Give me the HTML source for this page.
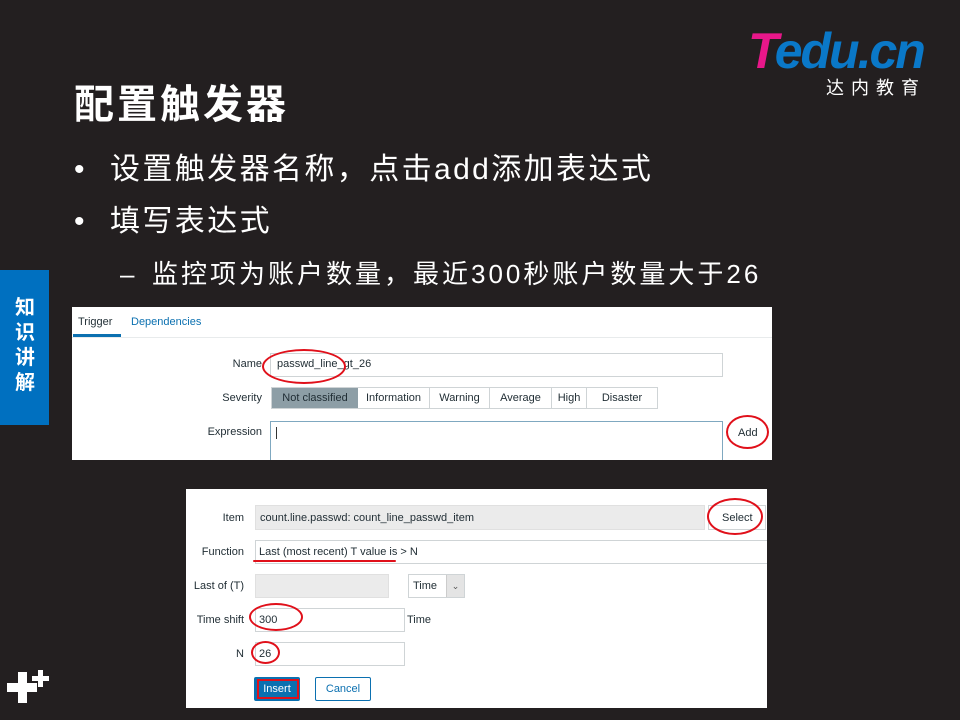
<!DOCTYPE html>
<html><head><meta charset="utf-8"><style>
*{margin:0;padding:0;box-sizing:border-box}
body{width:960px;height:720px;background:#231f20;position:relative;overflow:hidden;font-family:"Liberation Sans","Noto Sans CJK SC",sans-serif;color:#fff}
.a{position:absolute}
.cj{font-family:"Liberation Sans","Noto Sans CJK SC",sans-serif}
.s{font-family:"Liberation Sans",sans-serif;font-size:11px;color:#1f2c33}
.inp{position:absolute;border:1px solid #cfd4d6;background:#fff}
.lbl{position:absolute;text-align:right;font-size:11px;color:#1f2c33}
.red{position:absolute;border:2px solid #e0101a;border-radius:50%}
</style></head><body>
<div class="a cj" style="left:74px;top:72px;font-size:40px;font-weight:bold;letter-spacing:3px">配置触发器</div>
<div class="a" style="left:748px;top:26px;font-size:50px;font-weight:bold;font-style:italic;letter-spacing:-2px;line-height:50px"><span style="color:#e8178a">T</span><span style="color:#0a78c8">edu.cn</span></div>
<div class="a cj" style="left:826px;top:74px;font-size:18px;letter-spacing:7px">达内教育</div>
<div class="a cj" style="left:74px;top:150px;font-size:30px;line-height:40px">•</div>
<div class="a cj" style="left:110px;top:150px;font-size:30px;line-height:40px;letter-spacing:2.4px">设置触发器名称，点击add添加表达式</div>
<div class="a cj" style="left:74px;top:202px;font-size:30px;line-height:40px">•</div>
<div class="a cj" style="left:110px;top:202px;font-size:30px;line-height:40px;letter-spacing:2.4px">填写表达式</div>
<div class="a cj" style="left:120px;top:256px;font-size:26px;line-height:36px">–</div>
<div class="a cj" style="left:152px;top:256px;font-size:26px;line-height:36px;letter-spacing:3px">监控项为账户数量，最近300秒账户数量大于26</div>
<div class="a" style="left:0;top:270px;width:49px;height:155px;background:#0070c0"></div>
<div class="a cj" style="left:12px;top:296px;width:26px;font-size:20px;font-weight:bold;line-height:25px;text-align:center">知<br>识<br>讲<br>解</div>
<div class="a" style="left:7px;top:683px;width:30px;height:9px;background:#fff"></div>
<div class="a" style="left:18px;top:672px;width:9px;height:31px;background:#fff"></div>
<div class="a" style="left:32px;top:676px;width:17px;height:5px;background:#fff"></div>
<div class="a" style="left:38px;top:670px;width:5px;height:17px;background:#fff"></div>

<!-- panel 1 -->
<div class="a" style="left:72px;top:307px;width:700px;height:153px;background:#fff;overflow:hidden">
 <div class="a s" style="left:6px;top:9px">Trigger</div>
 <div class="a s" style="left:59px;top:9px;color:#0b70b0">Dependencies</div>
 <div class="a" style="left:1px;top:27px;width:48px;height:3px;background:#0b70b0"></div>
 <div class="a" style="left:0;top:30px;width:700px;height:1px;background:#e8ebec"></div>
 <div class="lbl" style="left:100px;top:51px;width:90px">Name</div>
 <div class="inp" style="left:198px;top:46px;width:453px;height:24px"></div>
 <div class="a s" style="left:205px;top:51px">passwd_line_gt_26</div>
 <div class="red" style="left:190px;top:42px;width:84px;height:35px"></div>
 <div class="lbl" style="left:100px;top:85px;width:90px">Severity</div>
 <div class="a" style="left:199px;top:80px;width:387px;height:22px;border:1px solid #cfd4d6;display:flex;font-size:11px;color:#1f2c33">
  <div style="width:86px;background:#8d9ea6;text-align:center;line-height:20px">Not classified</div>
  <div style="width:72px;text-align:center;line-height:20px;border-right:1px solid #cfd4d6">Information</div>
  <div style="width:60px;text-align:center;line-height:20px;border-right:1px solid #cfd4d6">Warning</div>
  <div style="width:62px;text-align:center;line-height:20px;border-right:1px solid #cfd4d6">Average</div>
  <div style="width:35px;text-align:center;line-height:20px;border-right:1px solid #cfd4d6">High</div>
  <div style="flex:1;text-align:center;line-height:20px">Disaster</div>
 </div>
 <div class="lbl" style="left:100px;top:119px;width:90px">Expression</div>
 <div class="inp" style="left:198px;top:114px;width:453px;height:45px;border-color:#7fa8c0"></div>
 <div class="a" style="left:204px;top:120px;width:1px;height:12px;background:#333"></div>
 <div class="a s" style="left:666px;top:120px">Add</div>
 <div class="red" style="left:654px;top:108px;width:43px;height:34px"></div>
</div>

<!-- panel 2 -->
<div class="a" style="left:186px;top:489px;width:581px;height:219px;background:#fff;overflow:hidden">
 <div class="lbl" style="left:0;top:23px;width:58px">Item</div>
 <div class="inp" style="left:69px;top:16px;width:450px;height:25px;background:#ebebeb;border-color:#e0e0e0"></div>
 <div class="a s" style="left:74px;top:23px">count.line.passwd: count_line_passwd_item</div>
 <div class="inp" style="left:522px;top:16px;width:58px;height:25px"></div>
 <div class="a s" style="left:536px;top:23px">Select</div>
 <div class="red" style="left:521px;top:9px;width:56px;height:37px"></div>
 <div class="lbl" style="left:0;top:57px;width:58px">Function</div>
 <div class="inp" style="left:69px;top:51px;width:520px;height:24px"></div>
 <div class="a s" style="left:73px;top:57px">Last (most recent) T value is &gt; N</div>
 <div class="a" style="left:67px;top:71px;width:143px;height:2px;background:#e0101a;border-radius:1px"></div>
 <div class="lbl" style="left:0;top:91px;width:58px">Last of (T)</div>
 <div class="inp" style="left:69px;top:85px;width:134px;height:24px;background:#ebebeb;border-color:#e0e0e0"></div>
 <div class="inp" style="left:222px;top:85px;width:57px;height:24px"></div>
 <div class="a s" style="left:227px;top:91px">Time</div>
 <div class="a" style="left:260px;top:86px;width:18px;height:22px;background:#e4e4e4;border-left:1px solid #ccc;font-size:9px;color:#555;text-align:center;line-height:22px">&#8964;</div>
 <div class="lbl" style="left:0;top:125px;width:58px">Time shift</div>
 <div class="inp" style="left:69px;top:119px;width:150px;height:24px"></div>
 <div class="a s" style="left:73px;top:125px">300</div>
 <div class="a s" style="left:221px;top:125px">Time</div>
 <div class="red" style="left:63px;top:114px;width:54px;height:28px"></div>
 <div class="lbl" style="left:0;top:159px;width:58px">N</div>
 <div class="inp" style="left:69px;top:153px;width:150px;height:24px"></div>
 <div class="a s" style="left:73px;top:159px">26</div>
 <div class="red" style="left:65px;top:152px;width:29px;height:23px"></div>
 <div class="a" style="left:68px;top:188px;width:46px;height:24px;background:#0b70b0;border-radius:2px;color:#fff;font-size:11px;text-align:center;line-height:24px">Insert</div>
 <div class="a" style="left:71px;top:190px;width:42px;height:20px;border:2px solid #e0101a"></div>
 <div class="a" style="left:129px;top:188px;width:56px;height:24px;border:1px solid #0b70b0;border-radius:2px;color:#0b70b0;font-size:11px;text-align:center;line-height:22px">Cancel</div>
</div>
</body></html>
